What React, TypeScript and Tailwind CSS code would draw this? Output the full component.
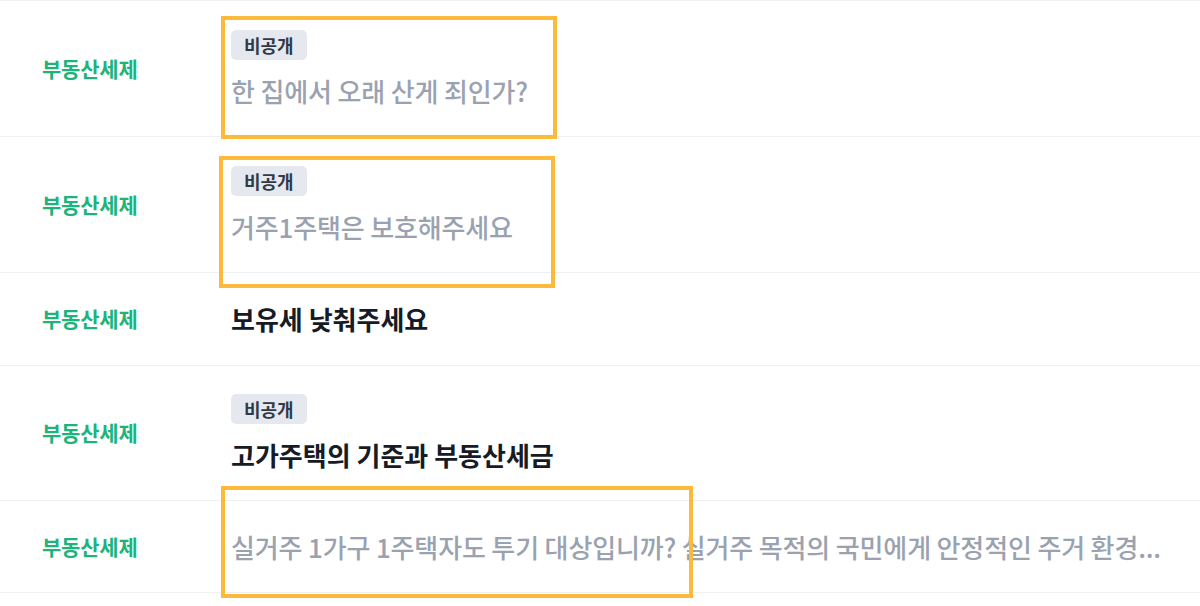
import React from "react";

type Row = {
  category: string;
  title: string;
  hidden?: boolean;
  dim?: boolean;
  h: string;
};

const rows: Row[] = [
  { category: "부동산세제", title: "한 집에서 오래 산게 죄인가?", hidden: true, dim: true, h: "h-[136px]" },
  { category: "부동산세제", title: "거주1주택은 보호해주세요", hidden: true, dim: true, h: "h-[136px]" },
  { category: "부동산세제", title: "보유세 낮춰주세요", h: "h-[93px]" },
  { category: "부동산세제", title: "고가주택의 기준과 부동산세금", hidden: true, h: "h-[135px]" },
  {
    category: "부동산세제",
    title: "실거주 1가구 1주택자도 투기 대상입니까? 실거주 목적의 국민에게 안정적인 주거 환경...",
    dim: true,
    h: "h-[92px]",
  },
];

function Badge() {
  return (
    <span className="inline-flex h-[30px] items-center rounded-[5px] bg-[#e5e9ef] px-[13px] text-[18px] font-bold leading-none text-[#323a47]">
      비공개
    </span>
  );
}

export default function App() {
  return (
    <div
      className="relative min-h-[606px] w-[1200px] overflow-hidden bg-white"
      style={{ fontFamily: '"Noto Sans CJK KR", "Noto Sans", sans-serif' }}
    >
      <div className="border-t border-[#eef0f2]">
        {rows.map((r, i) => (
          <div
            key={i}
            className={`flex items-center border-b border-[#eef0f2] pl-[42px] pr-[20px] ${r.h}`}
          >
            <div className="w-[189px] shrink-0 text-[21px] font-bold tracking-[-0.2px] text-[#1cb47a]">
              {r.category}
            </div>
            <div className="flex min-w-0 flex-1 flex-col items-start gap-[14px]">
              {r.hidden && <Badge />}
              <div
                className={`w-full whitespace-nowrap text-[26px] leading-[34px] ${
                  r.dim
                    ? "font-medium tracking-[-0.15px] text-[#9aa2b0]"
                    : "font-bold text-[#161b26]"
                }`}
              >
                {r.title}
              </div>
            </div>
          </div>
        ))}
      </div>

      {/* highlight frames drawn over the list */}
      <div className="pointer-events-none absolute left-[221px] top-[16px] h-[123px] w-[336px] border-[4px] border-[#fdb93a]" />
      <div className="pointer-events-none absolute left-[219px] top-[156px] h-[132px] w-[336px] border-[4px] border-[#fdb93a]" />
      <div className="pointer-events-none absolute left-[221px] top-[486px] h-[112px] w-[472px] border-[4px] border-[#fdb93a]" />
    </div>
  );
}
